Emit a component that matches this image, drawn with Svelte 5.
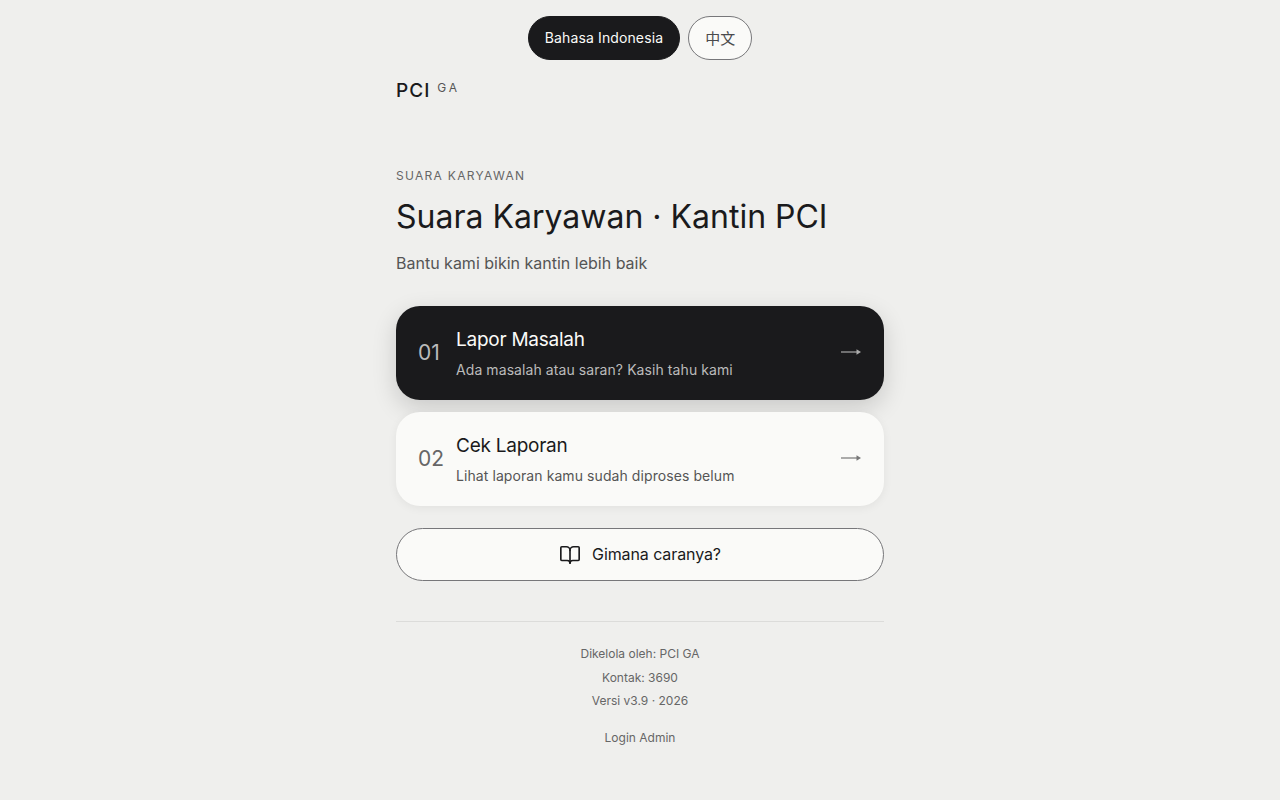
<script>
	const actions = [
		{ no: '01', title: 'Lapor Masalah', desc: 'Ada masalah atau saran? Kasih tahu kami', dark: true },
		{ no: '02', title: 'Cek Laporan', desc: 'Lihat laporan kamu sudah diproses belum', dark: false }
	];
</script>

<div class="page">
	<div class="lang">
		<button class="lang-btn active">Bahasa Indonesia</button>
		<button class="lang-btn zh">中文</button>
	</div>

	<div class="logo"><span class="logo-main">PCI</span><span class="logo-sub">GA</span></div>

	<p class="eyebrow">SUARA KARYAWAN</p>
	<h1>Suara Karyawan · Kantin PCI</h1>
	<p class="lead">Bantu kami bikin kantin lebih baik</p>

	<div class="cards">
		{#each actions as a}
			<button class="card" class:dark={a.dark}>
				<span class="no">{a.no}</span>
				<span class="text">
					<span class="title">{a.title}</span>
					<span class="desc">{a.desc}</span>
				</span>
				<svg class="arrow" width="22" height="10" viewBox="0 0 22 10">
					<path d="M1 5h17" stroke="currentColor" stroke-width="1.2" />
					<path d="M16.5 2.2 21 5l-4.5 2.8z" fill="currentColor" />
				</svg>
			</button>
		{/each}
	</div>

	<button class="guide">
		<svg width="22" height="22" viewBox="0 0 24 24" fill="none" stroke="currentColor" stroke-width="1.8" stroke-linecap="round" stroke-linejoin="round">
			<path d="M12 7v14" />
			<path d="M3 18a1 1 0 0 1-1-1V4a1 1 0 0 1 1-1h5a4 4 0 0 1 4 4 4 4 0 0 1 4-4h5a1 1 0 0 1 1 1v13a1 1 0 0 1-1 1h-6a3 3 0 0 0-3 3 3 3 0 0 0-3-3z" />
		</svg>
		<span>Gimana caranya?</span>
	</button>

	<footer>
		<p>Dikelola oleh: PCI GA</p>
		<p>Kontak: 3690</p>
		<p>Versi v3.9 · 2026</p>
		<p class="admin">Login Admin</p>
	</footer>
</div>

<style>
	:global(body) {
		background: #efefed;
		color: #1a1a1c;
		font-family: Inter, 'Noto Sans CJK SC', sans-serif;
	}

	.page {
		width: 488px;
		margin: 0 auto;
		padding-top: 16px;
	}

	button {
		font-family: inherit;
		cursor: pointer;
	}

	.lang {
		display: flex;
		justify-content: center;
		gap: 8px;
	}

	.lang-btn {
		height: 44px;
		padding: 0 16px 1px;
		border: 1px solid #77777a;
		border-radius: 22px;
		background: #fafaf8;
		color: #4a4a4c;
		font-size: 14px;
		letter-spacing: 0.12px;
	}

	.lang-btn.active {
		background: #1a1a1c;
		border-color: #1a1a1c;
		color: #fafaf8;
	}

	.lang-btn.zh {
		padding-bottom: 2px;
		font-size: 15px;
		letter-spacing: 0;
	}

	.logo {
		display: flex;
		align-items: flex-start;
		margin-top: 18px;
		height: 26px;
	}

	.logo-main {
		font-size: 19px;
		font-weight: 500;
		line-height: 26px;
		letter-spacing: 1px;
	}

	.logo-sub {
		margin: 2px 0 0 7px;
		font-size: 12px;
		line-height: 16px;
		letter-spacing: 2.8px;
		color: #555;
	}

	.eyebrow {
		margin: 64px 0 0;
		font-size: 12px;
		line-height: 16px;
		letter-spacing: 1.3px;
		color: #666;
	}

	h1 {
		margin: 11px 0 0;
		font-size: 32px;
		font-weight: 400;
		line-height: 44px;
	}

	.lead {
		margin: 12px 0 0;
		font-size: 16px;
		line-height: 24px;
		color: #555;
	}

	.cards {
		display: flex;
		flex-direction: column;
		gap: 12px;
		margin-top: 31px;
	}

	.card {
		display: flex;
		align-items: center;
		height: 94px;
		padding: 0 22px;
		border: none;
		border-radius: 24px;
		background: #fafaf8;
		color: #1a1a1c;
		text-align: left;
		box-shadow: 0 2px 10px rgba(0, 0, 0, 0.06);
	}

	.card.dark {
		background: #1a1a1c;
		color: #fafaf8;
		box-shadow: 0 8px 24px rgba(0, 0, 0, 0.16);
	}

	.no {
		width: 38px;
		padding-bottom: 2px;
		font-size: 21px;
		color: #666;
	}

	.dark .no {
		color: #bbb;
	}

	.text {
		flex: 1;
		display: flex;
		flex-direction: column;
		gap: 6px;
	}

	.title {
		font-size: 19px;
		line-height: 28px;
		letter-spacing: -0.25px;
	}

	.desc {
		font-size: 14px;
		line-height: 20px;
		letter-spacing: 0.08px;
		color: #555;
	}

	.dark .desc {
		color: #bbb;
	}

	.arrow {
		margin-bottom: 2px;
		color: #777;
	}

	.dark .arrow {
		color: #aaa;
	}

	.guide {
		display: flex;
		align-items: center;
		justify-content: center;
		gap: 11px;
		width: 100%;
		height: 53px;
		margin-top: 22px;
		border: 1px solid #77777a;
		border-radius: 27px;
		background: #fafaf8;
		color: #1a1a1c;
		font-size: 16px;
		letter-spacing: -0.1px;
	}

	.guide span {
		padding-bottom: 2px;
	}

	footer {
		margin-top: 40px;
		padding-top: 20px;
		border-top: 1px solid #dcdcda;
		text-align: center;
		font-size: 12px;
		color: #666;
	}

	footer p {
		margin: 0;
		line-height: 23.5px;
	}

	footer .admin {
		margin-top: 13px;
	}
</style>
